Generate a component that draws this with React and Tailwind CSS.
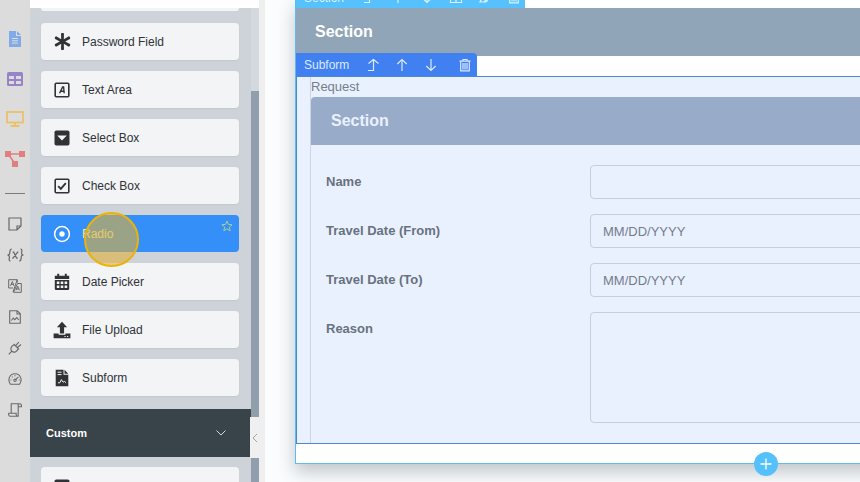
import { FaAsterisk } from "react-icons/fa";

function AreaIcon() {
  return (
    <svg viewBox="0 0 16 16" className="size-4" fill="none" stroke="currentColor">
      <rect x="1.2" y="1.2" width="13.6" height="13.6" rx="1" strokeWidth="1.6" />
      <path d="M5.600 11.300 8.600 5h1l.6 6.300M7 9.300h3" strokeWidth="1.4" />
    </svg>
  );
}
function SelectIcon() {
  return (
    <svg viewBox="0 0 16 16" className="size-4">
      <rect x="0.5" y="0.5" width="15" height="15" rx="1.8" fill="currentColor" />
      <path d="M3.2 5.600h9.600L8 10.6z" fill="#f3f4f6" />
    </svg>
  );
}
function CheckIcon() {
  return (
    <svg viewBox="0 0 16 16" className="size-4" fill="none" stroke="currentColor">
      <rect x="1.2" y="1.2" width="13.6" height="13.6" rx="1" strokeWidth="1.6" />
      <path d="m4.2 8.2 2.6 2.6 5-5.6" strokeWidth="1.9" />
    </svg>
  );
}
function RadioIcon() {
  return (
    <svg viewBox="0 0 18 18" className="size-[18px]" fill="none" stroke="currentColor">
      <circle cx="9" cy="9" r="7.4" strokeWidth="1.5" />
      <circle cx="9" cy="9" r="2.7" fill="currentColor" stroke="none" />
    </svg>
  );
}
function CalendarIcon() {
  return (
    <svg viewBox="0 0 16 18" className="h-[18px] w-4">
      <path d="M3.200.8h2v2h5.600v-2h2v2h2.400v3.200H.8V2.800h2.400zM.8 7h14.400v8.700q0 1.300-1.300 1.300H2.100Q.8 17 .8 15.700z" fill="currentColor" />
      <path d="M2.800 8.500h2.600v2.500H2.800zM6.700 8.500h2.600v2.500H6.700zM10.600 8.500h2.600v2.500h-2.600zM2.800 12.500h2.600V15H2.800zM6.700 12.500h2.600V15H6.700zM10.600 12.500h2.600V15h-2.600z" fill="#f3f4f6" />
    </svg>
  );
}
function UploadIcon() {
  return (
    <svg viewBox="0 0 18 18" className="size-[18px]" fill="currentColor">
      <path d="M9 .8 3.9 6.2h3v6.2h4.2V6.2h3z" />
      <path d="M.6 12.4h5v1.4h6.800v-1.4h5v4.800H.6z" />
      <path d="M11.400 15h1.200v1h-1.200zM14 15h1.200v1H14z" fill="#f3f4f6" />
    </svg>
  );
}
function SubformIcon() {
  return (
    <svg viewBox="0 0 14 18" className="h-[18px] w-3.5" fill="currentColor">
      <path d="M.7.8h7.800v5h4.800v11.400H.7z" />
      <path d="M9.500.8 13.300 4.700H9.500z" />
      <path d="M2.600 3.200h4M2.600 5.600h4M3 13.800h1.800l1.600-3.200 1.700 2.600 1.500-.8 1.500 1.400" fill="none" stroke="#f3f4f6" strokeWidth="1" />
    </svg>
  );
}
function StarIcon() {
  return (
    <svg viewBox="0 0 12 12" className="size-3" fill="none" stroke="#a9cf8e" strokeWidth="1">
      <path d="m6 1 1.400 3.400 3.700.3-2.800 2.400.9 3.700L6 8.800l-3.200 2 .9-3.700L.9 4.700l3.700-.3z" />
    </svg>
  );
}

const fields = [
  { label: "Password Field", icon: <FaAsterisk size={17} /> },
  { label: "Text Area", icon: <AreaIcon /> },
  { label: "Select Box", icon: <SelectIcon /> },
  { label: "Check Box", icon: <CheckIcon /> },
  { label: "Radio", icon: <RadioIcon />, active: true },
  { label: "Date Picker", icon: <CalendarIcon /> },
  { label: "File Upload", icon: <UploadIcon /> },
  { label: "Subform", icon: <SubformIcon /> },
];

function FieldCard({ label, icon, active }) {
  return (
    <li className="relative">
      <button
        type="button"
        className={
          "flex h-[37px] w-full items-center rounded pl-3 text-left text-xs " +
          (active ? "bg-[#348ff8] text-white" : "bg-[#f3f4f6] text-[#303236] shadow-xs")
        }
      >
        <span className="mr-[11px] flex w-[18px] justify-center">{icon}</span>
        <span className={active ? "text-[#f4f0b4]" : ""}>{label}</span>
      </button>
      {active && (
        <>
          <span className="absolute top-[5px] right-1.5"><StarIcon /></span>
          <span className="pointer-events-none absolute -top-[3px] left-[43px] z-10 size-[55px] rounded-full border-2 border-[#ebb20c] bg-[#dfb13a]/60" />
        </>
      )}
    </li>
  );
}

function RailButton({ label, children }) {
  return (
    <button type="button" aria-label={label} className="flex h-5 w-full items-center justify-center">
      {children}
    </button>
  );
}

function Rail() {
  return (
    <nav className="flex w-[30px] shrink-0 flex-col items-center bg-[#dcdcdc] pt-[29px] text-[#686868]">
      <div className="flex w-full flex-col gap-5">
        <RailButton label="Form">
          <svg viewBox="0 0 12 16" className="h-4 w-3" fill="#82a9e8">
            <path d="M0 0h7v5h5v11H0zM8 0l4 4H8z" />
            <path d="M3 7.500h6M3 9.800h6M3 12.100h6" stroke="#dcdcdc" />
          </svg>
        </RailButton>
        <RailButton label="List">
          <svg viewBox="0 0 16 14" className="h-3.5 w-4">
            <rect width="16" height="14" rx="1.500" fill="#9684c6" />
            <path d="M2 4h5v3H2zM9 4h5v3H9zM2 9h5v3H2zM9 9h5v3H9z" fill="#dcdcdc" />
          </svg>
        </RailButton>
        <RailButton label="Screen">
          <svg viewBox="0 0 18 16" className="h-4 w-[18px]" fill="none" stroke="#e9c168" strokeWidth="1.800">
            <rect x="1" y="1" width="16" height="10.500" />
            <path d="M9 11.500v3M4.500 15h9" />
          </svg>
        </RailButton>
        <RailButton label="Process">
          <svg viewBox="0 0 20 16" className="h-4 w-5" fill="#e07f7d">
            <path d="M3 3h14M4 4l6 9" stroke="#e07f7d" strokeWidth="1.600" />
            <path d="M0 0h6v6H0zM14 0h6v6h-6zM7 10h6v6H7z" />
          </svg>
        </RailButton>
      </div>
      <hr className="mt-6 w-5 border-t border-[#7b7b7b]" />
      <div className="mt-5 flex w-full flex-col gap-[11px]">
        <RailButton label="Notes">
          <svg viewBox="0 0 14 14" className="size-3.5" fill="none" stroke="currentColor" strokeWidth="1.200">
            <path d="M1 1h12v8l-4 4H1zM13 9H9v4" />
          </svg>
        </RailButton>
        <RailButton label="Variables">
          <svg viewBox="0 0 17 14" className="h-3.5 w-[17px]" fill="none" stroke="currentColor" strokeWidth="1.200">
            <path d="M4.800 1C2 1 3.400 4.500 2.400 6.200L1 7l1.200.9C3 9.500.9 13 3.500 13M13.500 1c2.600 0 .5 3.500 1.300 5.200L16 7l-1.400.8c-1 1.700.4 5.200-2.400 5.200" />
            <path d="M5.600 4.200h1.200l2.800 6h1.200M11.400 4.200h-.8L6 10.200h-.8" />
          </svg>
        </RailButton>
        <RailButton label="Translations">
          <svg viewBox="0 0 14 14" className="size-3.5" fill="none" stroke="currentColor">
            <path d="M5 9H.7V.7h8.500v3M5.500 13.300h7.800V4.500H9.500zM9.200.7 5 13M2.500 6.800l1.900-4.200 1.400 4.200M3 5.300h2.500M8 11.200l1.700-4 1.700 4M8.500 10h2.300" />
          </svg>
        </RailButton>
        <RailButton label="Media">
          <svg viewBox="0 0 12 14" className="h-3.5 w-3" fill="none" stroke="currentColor" strokeWidth="1.100">
            <path d="M.7.7h7.500l3.100 3.100v9.500H.7zM8 .7v3.300h3.300M2.300 10.500l2-2.500 1.500 1.600 2-2.100 2 2.500" />
          </svg>
        </RailButton>
        <RailButton label="Plugins">
          <svg viewBox="0 0 14 14" className="size-3.5" fill="none" stroke="currentColor" strokeWidth="1.100">
            <path d="m5.700 3 5.300 5.300M6.500 3.800C2.500 5 2.300 8.200 3.700 10.300c2.100 1.400 5.300 1.200 6.500-2.800M.7 13.300l3-3M7.800 4.700l3-3.500M9.500 6.500l3.500-3" />
          </svg>
        </RailButton>
        <RailButton label="Performance">
          <svg viewBox="0 0 14 12" className="h-3 w-3.5" fill="none" stroke="currentColor" strokeWidth="1.100">
            <path d="M2.500 11.300C-.7 7 1.300.7 7 .7s7.700 6.300 4.500 10.600z" />
            <circle cx="7" cy="7.300" r="1.200" />
            <path d="m7.900 6.400 2.600-2.600M2.500 7h1M10.800 7h1M4 3.700l.6.6M7 2.300v1" />
          </svg>
        </RailButton>
        <RailButton label="Log">
          <svg viewBox="0 0 14 14" className="size-3.5" fill="none" stroke="currentColor" strokeWidth="1.100">
            <path d="M3.200 10.200V.7h9.300M10.200 1v12.300H2c-1.600 0-1.600-3.100-1.200-3.100h7.400c-.2 2 .4 3.100 1.500 3.100M10.200 3.700h3.200V2C13.400.7 12 .7 11 .7" />
          </svg>
        </RailButton>
      </div>
    </nav>
  );
}

function Palette() {
  return (
    <aside className="relative flex w-[229px] shrink-0 flex-col bg-[#ced3da]">
      <header className="h-2 shrink-0 bg-white" />
      <div className="flex min-h-0 flex-1">
        <div className="min-w-0 flex-1 overflow-hidden">
          <div className="mr-3 ml-[11px] h-[3px] rounded-b bg-[#f3f4f6]" />
          <ul className="mt-3 mr-3 ml-[11px] flex flex-col gap-[11px]">
            {fields.map((field) => <FieldCard key={field.label} {...field} />)}
          </ul>
          <button type="button" className="mt-[13px] flex h-12 w-full items-center justify-between bg-[#39434a] pr-6 pl-4 text-[11px] font-bold text-white">
            Custom
            <svg viewBox="0 0 12 8" className="h-2 w-3" fill="none" stroke="#d5d9dc"><path d="m1.500 1.500 4.500 4.500 4.500-4.500" /></svg>
          </button>
          <div className="mt-[10px] mr-3 ml-[11px] h-[37px] rounded bg-[#f3f4f6] pt-3 pl-[13px] text-[#303236]">
            <SelectIcon />
          </div>
        </div>
        <div className="w-2 shrink-0 bg-[#d4d8df] pt-[83px]">
          <div className="h-full bg-[#919eac]" />
        </div>
      </div>
      <button type="button" aria-label="Collapse panel" className="absolute right-0 bottom-6 flex h-[41px] w-[9px] items-center justify-center bg-[#f0f0f0]">
        <svg viewBox="0 0 6 10" className="h-2.5 w-1.5" fill="none" stroke="#a2a2a2"><path d="M5 1 1 5l4 4" /></svg>
      </button>
    </aside>
  );
}

function ToolIcon({ d, label }) {
  return (
    <button type="button" aria-label={label} className="flex size-[14px] items-center justify-center">
      <svg viewBox="0 0 14 14" className="size-3.5" fill="none" stroke="currentColor" strokeWidth="1.200"><path d={d} /></svg>
    </button>
  );
}

const upOut = "M2 12.500h5.500V1.500M2.500 5.500l5-4 5 4";
const up = "M7 13V1.500M2.300 6 7 1.500 11.700 6";
const down = "M7 1v11.500M2.300 8 7 12.500 11.700 8";
const trash = "M1.500 3.200h11M5 3V1.500h4V3M2.700 3.500v9.300h8.600V3.500M5 5v6.500M7 5v6.500M9 5v6.500";

const input = "block h-[34px] w-full rounded border border-[#c5cede] bg-transparent px-3 text-[13px] text-[#737d8d] placeholder:text-[#737d8d]";

function FormRow({ id, label, children }) {
  return (
    <div className="flex items-start">
      <label htmlFor={id} className="w-[264px] shrink-0 pt-[7px] text-[13px] leading-5 font-bold text-[#68717f]">{label}</label>
      <div className="flex-1">{children}</div>
    </div>
  );
}

function Canvas() {
  return (
    <main className="min-w-0 flex-1 overflow-hidden bg-[#fafcfd] pl-[30px]">
      <section className="relative flex min-w-[940px] flex-col border-b border-l border-[#5cbcee] bg-white shadow-[0_8px_16px_rgba(60,75,85,0.3)]">
        <div className="flex h-2 w-[229px] items-end gap-[15px] overflow-hidden bg-[#56c1fd] pb-1 pl-2 text-xs leading-3 text-[#d9f2ff]">
          <span className="w-[43px]">Section</span>
          <ToolIcon label="Move out" d={upOut} />
          <ToolIcon label="Move up" d={up} />
          <ToolIcon label="Move down" d={down} />
          <ToolIcon label="Columns" d="M1.500 2h11v10.500h-11zM7 2v10.500M1.500 7h11" />
          <ToolIcon label="Style" d="M2 12h4l6-7-2-3-6 6zM6 12c3 0 4-2 4-4" />
          <ToolIcon label="Delete" d={trash} />
        </div>
        <h2 className="flex h-12 items-center bg-[#91a5b8] pl-[19px] text-base font-bold text-white">Section</h2>
        <div className="relative h-5">
          <div className="absolute -top-[3px] left-0 flex h-[23px] w-[181px] items-center rounded-tr-sm bg-[#4080f0] pl-2 text-xs text-[#dceaff]">
            <span className="w-[54px]">Subform</span>
            <div className="flex flex-1 items-center justify-between pr-[5px] pl-2">
              <div className="flex gap-[15px]">
                <ToolIcon label="Move subform out" d={upOut} />
                <ToolIcon label="Move subform up" d={up} />
                <ToolIcon label="Move subform down" d={down} />
              </div>
              <ToolIcon label="Delete subform" d={trash} />
            </div>
          </div>
        </div>
        <div className="border-y border-l border-[#4c87d0] bg-[#eaf1fe] pl-[13px]">
          <div className="border-l border-[#cdd5e4]">
            <p className="h-5 text-[13px] leading-5 text-[#747e8c]">Request</p>
            <h3 className="flex h-12 items-center rounded-tl-sm bg-[#98abc8] pl-5 text-base font-bold text-[#eaf1fe]">Section</h3>
            <form className="flex flex-col gap-[15px] pt-5 pb-5 pl-[15px]">
              <FormRow id="name" label="Name"><input id="name" type="text" className={input} /></FormRow>
              <FormRow id="from" label="Travel Date (From)"><input id="from" type="text" placeholder="MM/DD/YYYY" className={input} /></FormRow>
              <FormRow id="to" label="Travel Date (To)"><input id="to" type="text" placeholder="MM/DD/YYYY" className={input} /></FormRow>
              <FormRow id="reason" label="Reason"><textarea id="reason" className="block h-[111px] w-full resize-none rounded border border-[#c5cede] bg-transparent" /></FormRow>
            </form>
          </div>
        </div>
        <div className="h-[19px]" />
        <button type="button" aria-label="Add section" className="absolute -bottom-[13px] left-1/2 flex size-6 -translate-x-1/2 items-center justify-center rounded-full bg-[#54c1fc]">
          <svg viewBox="0 0 12 12" className="size-3" stroke="white" strokeWidth="1.300"><path d="M6 .5v11M.5 6h11" /></svg>
        </button>
      </section>
    </main>
  );
}

export default function App() {
  return (
    <div className="flex h-screen overflow-hidden font-['Liberation_Sans',Arial,sans-serif]">
      <Rail />
      <Palette />
      <div className="w-1.5 shrink-0 bg-[#efefef]" />
      <Canvas />
    </div>
  );
}
